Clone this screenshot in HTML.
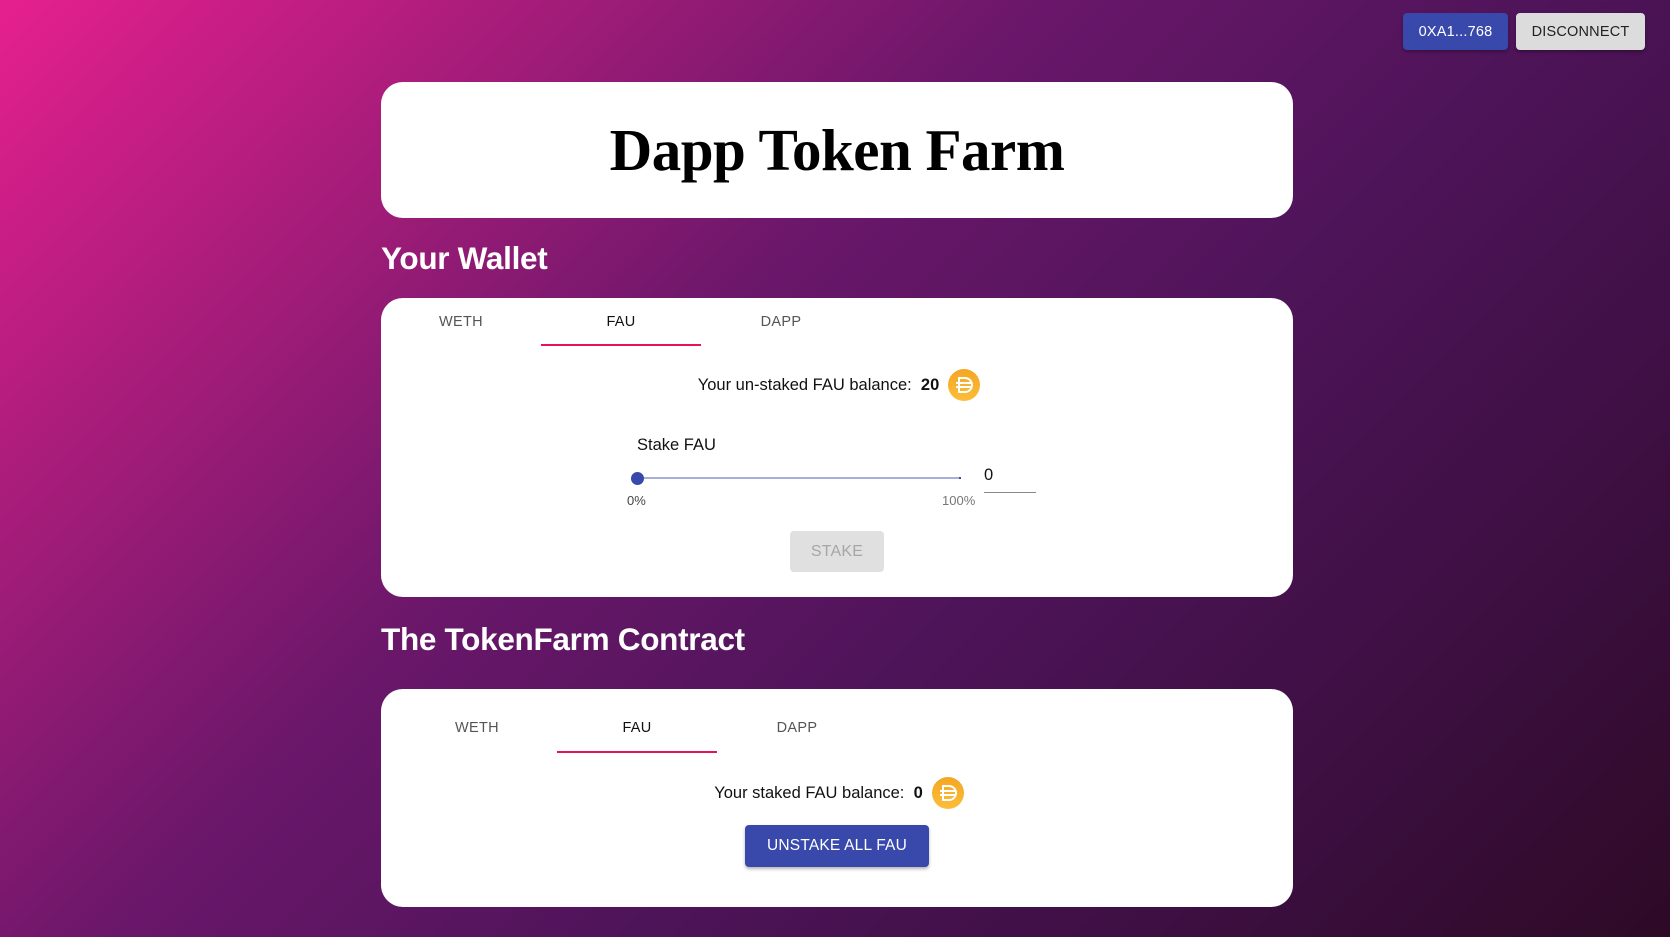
<!DOCTYPE html>
<html><head><meta charset="utf-8"><style>
*{box-sizing:border-box;margin:0;padding:0}
body{width:1670px;height:937px;overflow:hidden;position:relative;font-family:"Liberation Sans",Arial,sans-serif;
background:linear-gradient(135deg,#e6208e 0%,#a11c78 22%,#6a176a 40%,#4e1459 60%,#3d0f42 80%,#2e0a26 100%);}
.abs{position:absolute}
.btn{position:absolute;border-radius:4px;font-size:14.5px;letter-spacing:.2px;display:flex;align-items:center;justify-content:center;box-shadow:0 2px 3px rgba(0,0,0,.3)}
.card{position:absolute;left:381px;width:912px;background:#fff;border-radius:22px}
h2{position:absolute;left:381px;color:#fff;font-size:31.5px;font-weight:bold;letter-spacing:-.3px}
.tab{position:absolute;width:160px;text-align:center;font-size:14.5px;color:#555;letter-spacing:.3px}
.tab.on{color:#111}
.ind{position:absolute;width:160px;height:2px;background:#e8115b}
.coin{width:32px;height:32px;border-radius:50%;background:linear-gradient(#f5a623,#fbbd3a);margin-left:9px;flex:none}
.txt{position:absolute;font-size:16.5px;color:#111;white-space:nowrap}
.row{position:absolute;left:381px;width:912px;display:flex;justify-content:center;align-items:center;font-size:16.5px;color:#111;white-space:nowrap}
</style></head><body>
<div class="btn" style="left:1403px;top:13px;width:105px;height:37px;background:#3949ab;color:#fff">0XA1...768</div>
<div class="btn" style="left:1516px;top:13px;width:129px;height:37px;background:#dcdcdc;color:#222">DISCONNECT</div>

<div class="card" style="top:82px;height:136px"></div>
<div class="abs" style="left:381px;width:912px;top:116px;text-align:center;font-family:'Liberation Serif',serif;font-weight:bold;font-size:59px;color:#000;letter-spacing:-.5px">Dapp Token Farm</div>

<h2 style="top:240px">Your Wallet</h2>
<div class="card" style="top:298px;height:299px"></div>
<div class="tab" style="left:381px;top:314px">WETH</div>
<div class="tab on" style="left:541px;top:314px">FAU</div>
<div class="tab" style="left:701px;top:314px">DAPP</div>
<div class="ind" style="left:541px;top:344px"></div>
<div class="row" style="top:369px;padding-left:4px"><span>Your un-staked FAU balance:&nbsp; <b>20</b></span><div class="coin"><svg width="32" height="32" viewBox="0 0 32 32"><g stroke="#fff" stroke-width="2" fill="none"><path d="M11 9h6a7 7 0 0 1 0 14h-6z"/><path d="M8 14h16M8 18h16"/></g></svg></div></div>
<div class="txt" style="left:637px;top:436px">Stake FAU</div>
<div class="abs" style="left:637px;top:477px;width:324px;height:2px;background:#a9afdb"></div>
<div class="abs" style="left:631px;top:472px;width:13px;height:13px;border-radius:50%;background:#3949ab"></div>
<div class="abs" style="left:959px;top:477px;width:2px;height:2px;background:#3949ab"></div>
<div class="abs" style="left:627px;top:493px;font-size:13px;color:#444">0%</div>
<div class="abs" style="left:942px;top:493px;font-size:13px;color:#777">100%</div>
<div class="txt" style="left:984px;top:466px">0</div>
<div class="abs" style="left:984px;top:492px;width:52px;height:1px;background:#888"></div>
<div class="btn" style="left:790px;top:531px;width:94px;height:41px;background:#e0e0e0;color:#a6a6a6;box-shadow:none;font-size:16px">STAKE</div>

<h2 style="top:621px">The TokenFarm Contract</h2>
<div class="card" style="top:689px;height:218px"></div>
<div class="tab" style="left:397px;top:720px">WETH</div>
<div class="tab on" style="left:557px;top:720px">FAU</div>
<div class="tab" style="left:717px;top:720px">DAPP</div>
<div class="ind" style="left:557px;top:751px"></div>
<div class="row" style="top:777px;padding-left:4px"><span>Your staked FAU balance:&nbsp; <b>0</b></span><div class="coin"><svg width="32" height="32" viewBox="0 0 32 32"><g stroke="#fff" stroke-width="2" fill="none"><path d="M11 9h6a7 7 0 0 1 0 14h-6z"/><path d="M8 14h16M8 18h16"/></g></svg></div></div>
<div class="btn" style="left:745px;top:825px;width:184px;height:42px;background:#3949ab;color:#fff;font-size:15.5px">UNSTAKE ALL FAU</div>
</body></html>
